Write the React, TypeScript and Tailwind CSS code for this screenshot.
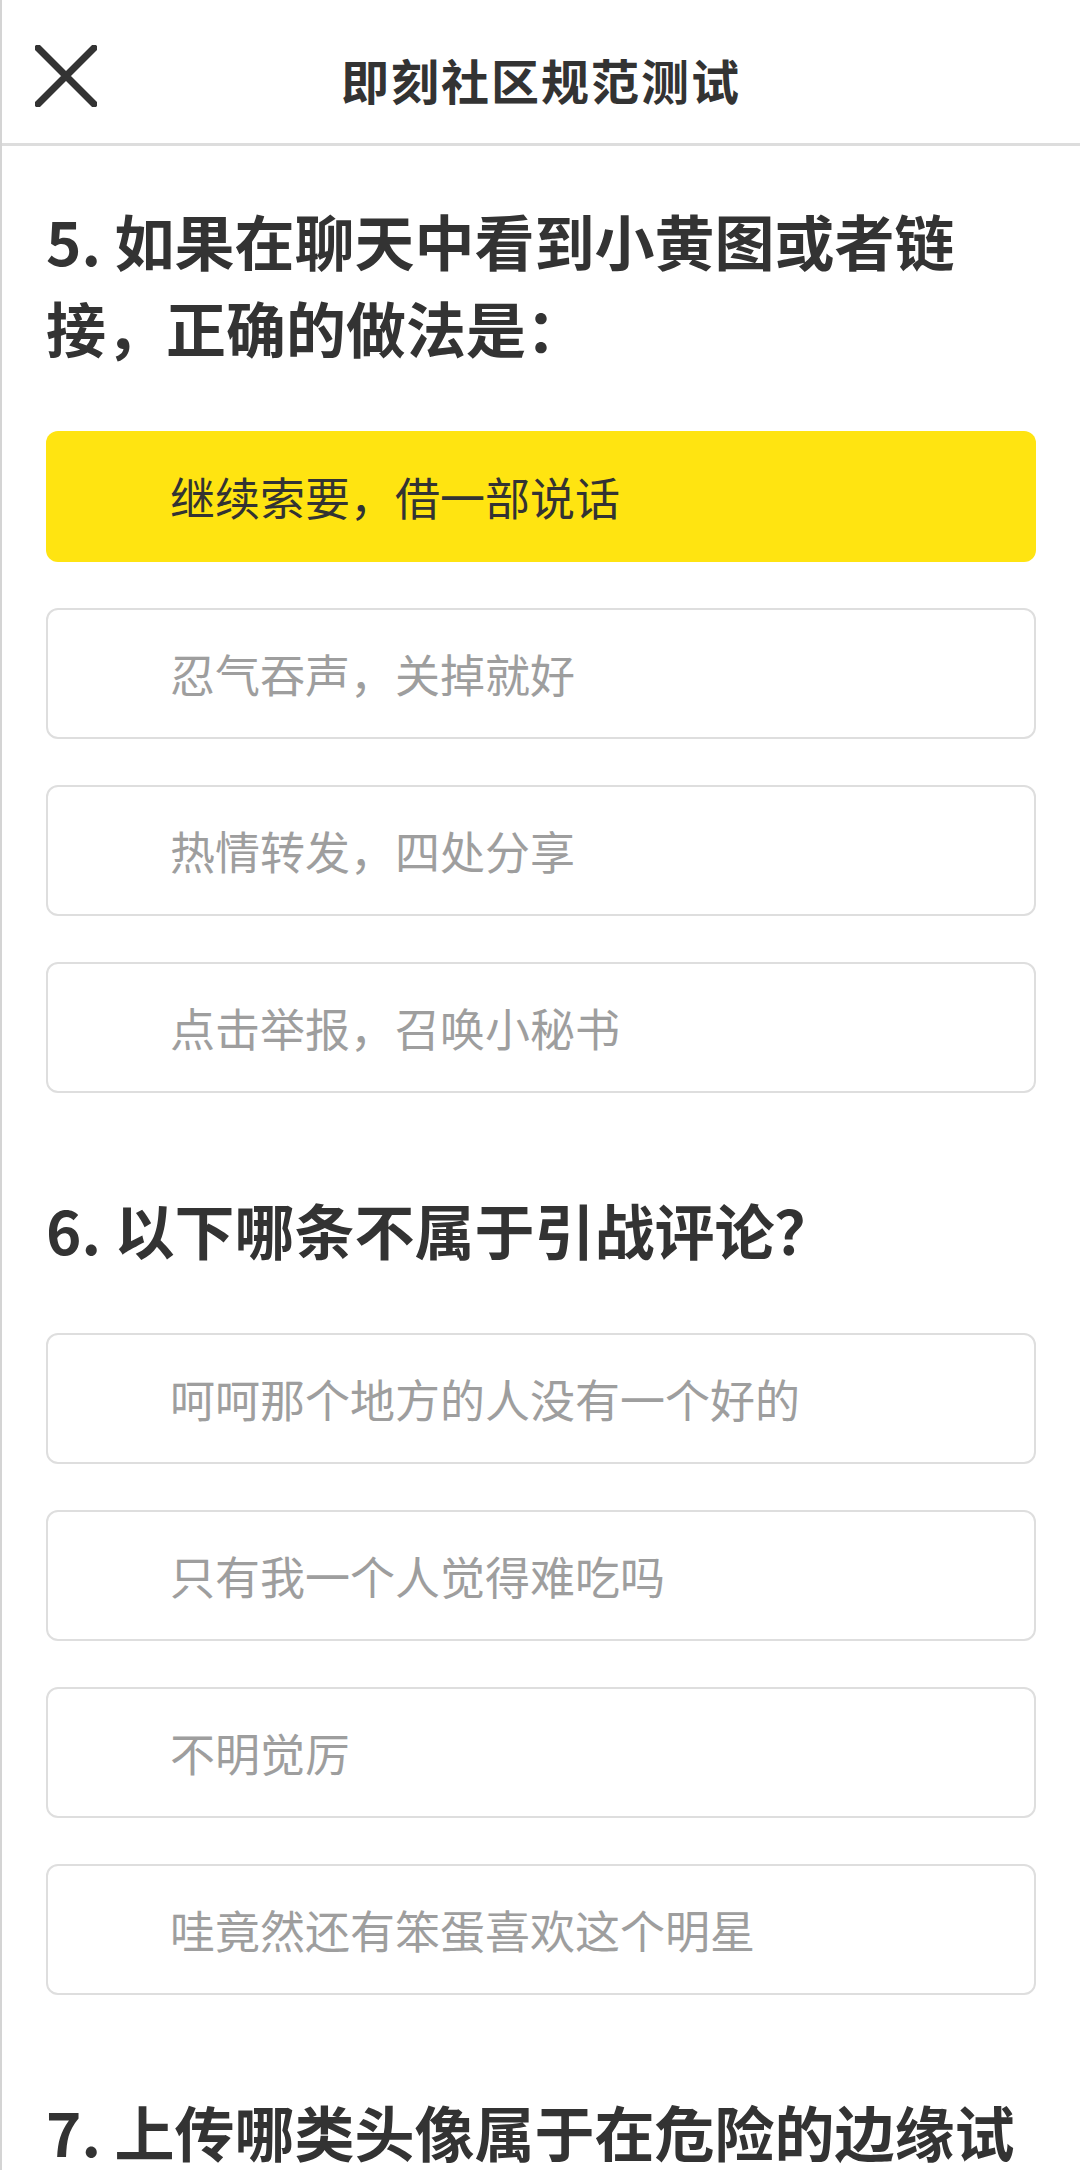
import React from 'react';

type Question = {
  title: string;
  options: string[];
  selected?: number;
};

const questions: Question[] = [
  {
    title: '5. 如果在聊天中看到小黄图或者链接，正确的做法是：',
    options: ['继续索要，借一部说话', '忍气吞声，关掉就好', '热情转发，四处分享', '点击举报，召唤小秘书'],
    selected: 0,
  },
  {
    title: '6. 以下哪条不属于引战评论？',
    options: ['呵呵那个地方的人没有一个好的', '只有我一个人觉得难吃吗', '不明觉厉', '哇竟然还有笨蛋喜欢这个明星'],
  },
  {
    title: '7. 上传哪类头像属于在危险的边缘试探？',
    options: [],
  },
];

function CloseIcon() {
  return (
    <svg width="62" height="62" viewBox="0 0 62 62" fill="none">
      <path d="M3 3L59 59M59 3L3 59" stroke="#333333" strokeWidth="7" strokeLinecap="round" />
    </svg>
  );
}

function Option({ text, active }: { text: string; active: boolean }) {
  return (
    <div
      className={
        active
          ? 'h-[131px] flex items-center pl-[124px] rounded-[12px] bg-[#ffe411] text-[#333333]'
          : 'h-[131px] flex items-center pl-[122px] rounded-[12px] border-2 border-[#dedede] bg-white text-[#9e9e9e]'
      }
    >
      <span className="text-[45px] leading-none">{text}</span>
    </div>
  );
}

export default function App() {
  return (
    <div
      className="w-[1080px] h-[2170px] overflow-hidden bg-white border-l-2 border-[#d4d4d4]"
      style={{ fontFamily: '"Noto Sans CJK SC", "Noto Sans", sans-serif' }}
    >
      <div className="h-[146px] border-b-[3px] border-[#dddddd] grid grid-cols-[1fr_auto_1fr] items-center">
        <div className="pl-[33px] pt-[8px]">
          <CloseIcon />
        </div>
        <div className="text-[48px] font-bold text-[#333333] pt-[14px] tracking-[2px]">即刻社区规范测试</div>
        <div />
      </div>

      <div className="pl-[44px] pr-[44px] pt-[50px]">
        {questions.map((q, qi) => (
          <div key={qi} className={qi === 0 ? '' : 'mt-[92px]'}>
            <h2 className="text-[60px] leading-[87px] font-bold text-[#333333]">{q.title}</h2>
            {q.options.length > 0 && (
              <div className="mt-[61px] flex flex-col gap-[46px]">
                {q.options.map((o, oi) => (
                  <Option key={oi} text={o} active={q.selected === oi} />
                ))}
              </div>
            )}
          </div>
        ))}
      </div>
    </div>
  );
}
